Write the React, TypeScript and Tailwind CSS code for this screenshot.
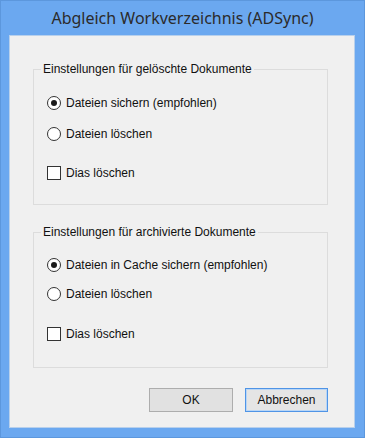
import React from "react";

function Radio({ checked, label }: { checked?: boolean; label: string }) {
  return (
    <div className="flex items-center h-[20px]">
      <span className="w-[14px] h-[14px] rounded-full border border-[#333333] bg-white flex items-center justify-center">
        {checked && <span className="w-[6px] h-[6px] rounded-full bg-[#1a1a1a]" />}
      </span>
      <span className="ml-[5px]">{label}</span>
    </div>
  );
}

function Check({ label }: { label: string }) {
  return (
    <div className="flex items-center h-[20px]">
      <span className="w-[14px] h-[14px] border border-[#333333] bg-white" />
      <span className="ml-[5px]">{label}</span>
    </div>
  );
}

export default function App() {
  return (
    <div className="w-[365px] h-[438px] bg-[#6ba8f0] border border-[#5c97dd] flex flex-col" style={{ fontFamily: '"Liberation Sans", Arial, sans-serif' }}>
      {/* Title bar */}
      <div className="h-[34px] flex items-center justify-center text-[16px] text-[#2b2b2b]" style={{ fontFamily: '"Noto Sans", "Liberation Sans", sans-serif' }}>
        Abgleich Workverzeichnis (ADSync)
      </div>

      {/* Client area */}
      <div className="ml-[8px] w-[346px] h-[393px] bg-[#f0f0f0] border border-[#b8d0ec] text-[12px] text-[#111111] flex flex-col">
        <fieldset className="ml-[23px] mt-[26px] w-[295px] border border-[#dcdcdc] pb-[21px]">
          <legend className="ml-[7px] px-[2px] leading-[14px]">Einstellungen für gelöschte Dokumente</legend>
          <div className="pl-[13px]">
            <div className="mt-[17px]">
              <Radio checked label="Dateien sichern (empfohlen)" />
            </div>
            <div className="mt-[11px]">
              <Radio label="Dateien löschen" />
            </div>
            <div className="mt-[19px]">
              <Check label="Dias löschen" />
            </div>
          </div>
        </fieldset>

        <fieldset className="ml-[23px] mt-[20px] w-[295px] border border-[#dcdcdc] pb-[23px]">
          <legend className="ml-[7px] px-[2px] leading-[14px]">Einstellungen für archivierte Dokumente</legend>
          <div className="pl-[13px]">
            <div className="mt-[16px]">
              <Radio checked label="Dateien in Cache sichern (empfohlen)" />
            </div>
            <div className="mt-[9px]">
              <Radio label="Dateien löschen" />
            </div>
            <div className="mt-[20px]">
              <Check label="Dias löschen" />
            </div>
          </div>
        </fieldset>

        <div className="mt-[20px] ml-[139px] flex gap-[12px]">
          <button className="w-[84px] h-[24px] border border-[#adadad] bg-[#e1e1e1] text-[12px]">OK</button>
          <button className="w-[83px] h-[24px] border border-[#4f94e6] bg-[#e5e5e5] text-[12px] shadow-[inset_0_0_0_1px_#b9d6f6]">Abbrechen</button>
        </div>
      </div>
    </div>
  );
}
